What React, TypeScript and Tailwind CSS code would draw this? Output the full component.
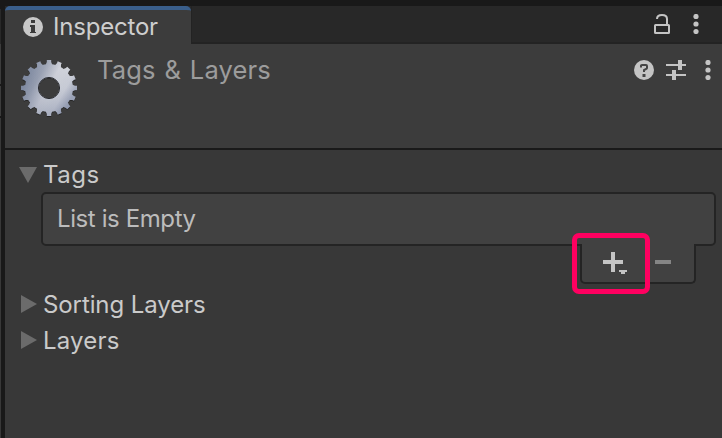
const teeth = Array.from({ length: 16 }, (_, i) => i * 22.5);

function Kebab() {
  return (
    <svg className="block h-5 w-[6px]" viewBox="0 0 6 20" fill="#c4c4c4">
      <circle cx="3" cy="2.5" r="2.6" />
      <circle cx="3" cy="10" r="2.6" />
      <circle cx="3" cy="17.5" r="2.6" />
    </svg>
  );
}

function Gear() {
  return (
    <svg className="block h-[60px] w-[60px] shrink-0" viewBox="-30 -30 60 60">
      <defs>
        <linearGradient id="metal" gradientUnits="userSpaceOnUse" x1="-22" y1="-10" x2="20" y2="14">
          <stop offset="0" stopColor="#7c879e" />
          <stop offset="0.2" stopColor="#949cae" />
          <stop offset="0.48" stopColor="#cfd1d9" />
          <stop offset="0.6" stopColor="#d0d3da" />
          <stop offset="0.8" stopColor="#cdd0d9" />
          <stop offset="1" stopColor="#a3aabc" />
        </linearGradient>
        <linearGradient id="shade" x1="0" y1="0" x2="0" y2="1">
          <stop offset="0" stopColor="#ffffff" stopOpacity="0.15" />
          <stop offset="0.5" stopColor="#7a86a4" stopOpacity="0.08" />
          <stop offset="1" stopColor="#4c5a80" stopOpacity="0.32" />
        </linearGradient>
        <mask id="gearShape">
          <circle r="24" fill="white" />
          {teeth.map((a) => (
            <path key={a} d="M-3.4 -23L-2.2 -26V-28H2.2V-26L3.4 -23Z" fill="white" transform={`rotate(${a})`} />
          ))}
          <circle r="10.3" fill="black" />
        </mask>
      </defs>
      <g transform="translate(0 .9)" opacity=".6">
        <rect x="-30" y="-30" width="60" height="60" fill="#151515" mask="url(#gearShape)" />
      </g>
      <g mask="url(#gearShape)">
        <rect x="-30" y="-30" width="60" height="60" fill="url(#metal)" />
        <rect x="-30" y="-30" width="60" height="60" fill="url(#shade)" />
      </g>
      <circle r="10.6" fill="none" stroke="#2c2e33" strokeWidth="1" />
    </svg>
  );
}

function Foldout({ label, open, spacing }: { label: string; open?: boolean; spacing: string }) {
  return (
    <div className="flex h-9 items-center">
      <svg className="mr-[6px] block h-[18px] w-[18px]" viewBox="0 0 18 18" fill="#6b6b6b">
        {open ? <path d="M0 2H18L9 18Z" /> : <path d="M2 0V18L18 9Z" />}
      </svg>
      <span className={`pt-0.5 text-[24px] leading-[34px] text-[#cacaca] ${spacing}`}>{label}</span>
    </div>
  );
}

export default function App() {
  return (
    <div className="flex h-[438px] w-[722px] overflow-hidden bg-[#191919] font-['Inter',sans-serif] whitespace-nowrap">
      <div className="flex w-px flex-col pt-[9px]">
        <div className="h-[35px] bg-[#282828]" />
        <div className="h-10 bg-[#3c3c3c]" />
        <div className="mt-0.5 h-[30px] bg-[#3c3c3c]" />
        <div className="mt-0.5 flex-1 bg-[#383838]" />
      </div>
      <div className="ml-1 flex flex-1 flex-col pt-1.5">
        <header className="flex h-[38px] bg-[#282828]">
          <div className="flex w-[186px] items-center overflow-hidden rounded-t-[5px] border-t-4 border-[#3a5f8c] bg-[#3c3c3c] pl-[18px]">
            <svg className="mr-[10px] block h-5 w-5" viewBox="0 0 20 20">
              <circle cx="10" cy="10" r="10" fill="#c8c8c8" />
              <path d="M8 3H12V6H8ZM7 8H12V15H13V16H7V15H8V10H7Z" fill="#3c3c3c" />
            </svg>
            <span className="text-[24px] leading-[34px] tracking-[-0.2px] text-[#cecece]">Inspector</span>
          </div>
          <div className="flex flex-1 items-start justify-end border-b-2 border-l border-[#232323] pt-2 pr-[23px]">
            <svg className="mr-[23px] block h-5 w-4" viewBox="0 0 16 20" fill="none" stroke="#c4c4c4" strokeWidth="2">
              <rect x="1" y="11" width="14" height="8" rx="0.5" />
              <path d="M3 5C3 2.5 5 1 8 1C11 1 13 2.5 13 5V11" />
            </svg>
            <Kebab />
          </div>
        </header>
        <section className="flex h-[106px] items-start border-b-2 border-[#1a1a1a] bg-[#3c3c3c] pl-[14px]">
          <div className="pt-[14px]"><Gear /></div>
          <h1 className="ml-[18px] pt-[11px] text-[25.5px] leading-[30px] font-normal tracking-[0.15px] [word-spacing:1.5px] text-[#9c9c9c]">Tags &amp; Layers</h1>
          <div className="ml-auto flex items-center pt-4 pr-[11px]">
            <svg className="mr-3 block h-5 w-5" viewBox="0 0 20 20">
              <circle cx="10" cy="10" r="10" fill="#c4c4c4" />
              <path d="M7 7.5V5.5Q7 5 8 5H12Q13 5 13 6V8Q13 8.8 12 9L10 10V12" fill="none" stroke="#454545" strokeWidth="2" />
              <path d="M8.5 14H11.5V17H8.5Z" fill="#454545" />
            </svg>
            <svg className="mr-[19px] block h-5 w-5" viewBox="0 0 20 20" fill="#c4c4c4">
              <path d="M0 4H12V0H16V4H20V6H16V10H12V6H0ZM0 14H6V10H10V14H20V16H10V20H6V16H0Z" />
            </svg>
            <Kebab />
          </div>
        </section>
        <main className="flex flex-1 flex-col bg-[#383838] pt-[6px] pl-[14px]">
          <Foldout label="Tags" open spacing="tracking-[0.5px]" />
          <div className="ml-[22px] h-[54px] w-[675px] rounded-[5px] border-2 border-[#242424] bg-[#414141] pl-[14px] text-[24px] leading-[50px] tracking-[-0.4px] text-[#bcbcbc]">
            List is Empty
          </div>
          <div className="relative -mt-0.5 ml-[561px] flex h-10 w-[116px] rounded-b-[5px] border-x-2 border-b-2 border-[#242424] bg-[#414141]">
            <svg className="mt-[8px] ml-[21px] block h-6 w-6" viewBox="0 0 24 24" fill="#c4c4c4">
              <path d="M8 0H12V8H20V12H12V20H8V12H0V8H8ZM16 18H24V20H22V22H18V20H16Z" />
            </svg>
            <div className="mt-4 ml-7 h-1 w-4 bg-[#858585]" />
            <div className="absolute -top-[11px] -left-[10px] h-[61px] w-[78px] rounded-[7px] border-[5px] border-[#ff0060]" />
          </div>
          <div className="mt-[2px]">
            <Foldout label="Sorting Layers" spacing="tracking-[-0.1px]" />
            <Foldout label="Layers" spacing="tracking-[0.2px]" />
          </div>
        </main>
      </div>
    </div>
  );
}
